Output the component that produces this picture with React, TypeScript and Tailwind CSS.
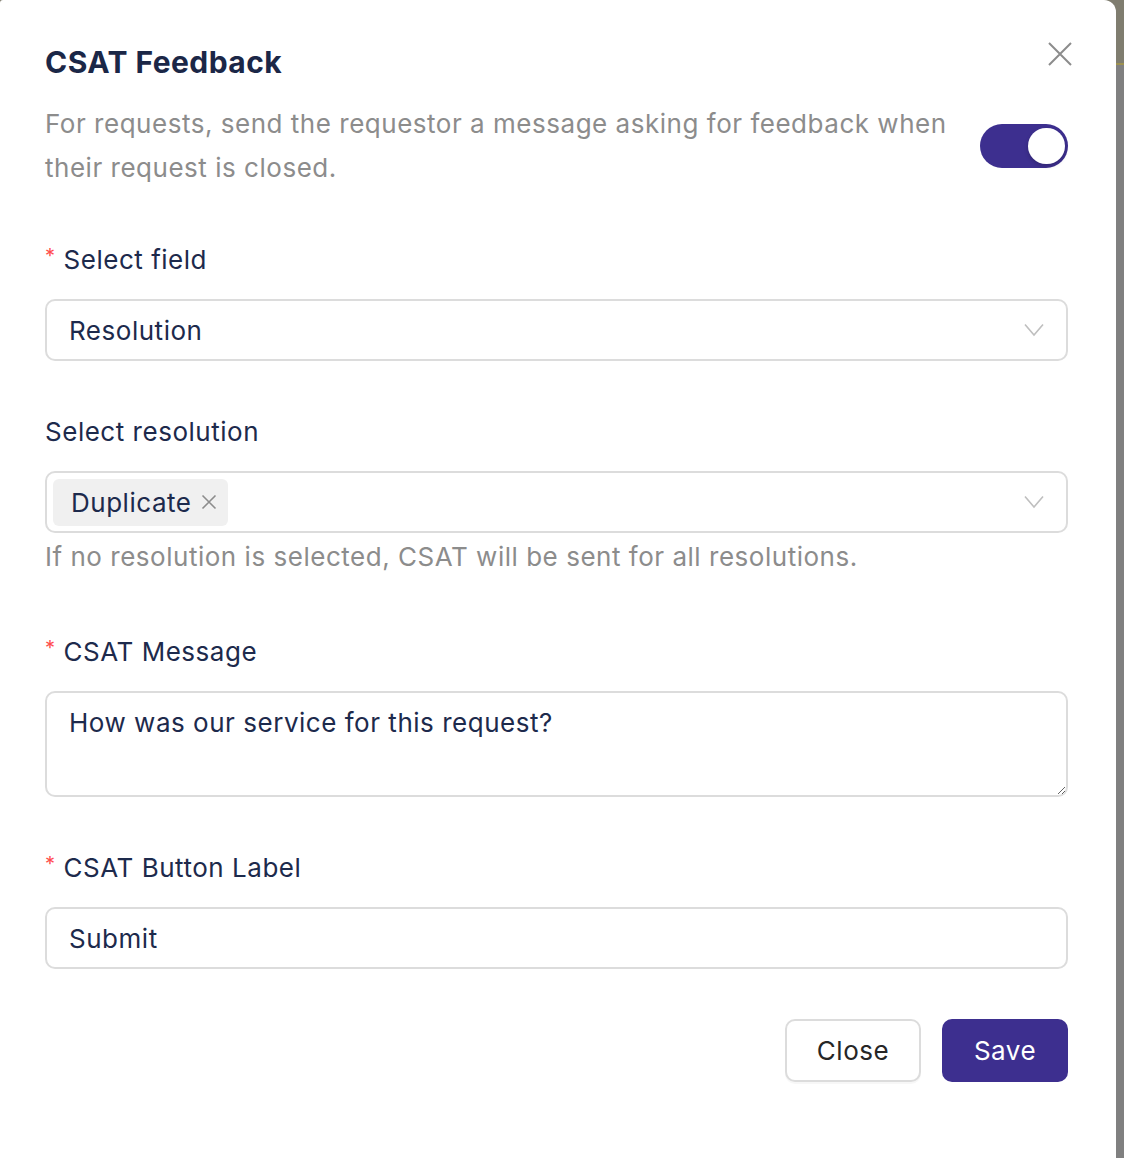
import { useState } from "react";

const Chevron = () => (
  <svg width="20" height="14" viewBox="0 0 20 14" fill="none" className="shrink-0">
    <polyline points="1,1.5 10,12 19,1.5" stroke="#bfbfbf" strokeWidth="1.6" />
  </svg>
);

const Required = () => <span className="mr-[8px] text-[20px] leading-none text-[#ff4d4f] relative -top-[4px]">*</span>;

const Label = ({ children, required }: { children: string; required?: boolean }) => (
  <div className="flex items-center h-[36px] text-[26px] leading-[36px] tracking-[0.02em] text-[#1d2a4c]">
    {required && <Required />}
    {children}
  </div>
);

export default function App() {
  const [enabled, setEnabled] = useState(true);

  return (
    <div className="flex h-[1158px] w-[1124px] bg-[linear-gradient(to_bottom,#7f7d6f_0,#7f7d6f_63px,#9d9150_63px,#9d9150_65px,#808080_65px)] font-['Inter','Noto_Sans',sans-serif] overflow-hidden">
      <div className="relative w-[1116px] bg-white rounded-tr-[12px] rounded-tl-[3px] pl-[45px] pr-[48px] pt-[42px]">
        {/* close icon */}
        <button className="absolute top-[42px] right-[44px] w-[24px] h-[24px]" aria-label="close">
          <svg width="24" height="24" viewBox="0 0 24 24" fill="none">
            <path d="M1 1L23 23M23 1L1 23" stroke="#8c8c8c" strokeWidth="2" />
          </svg>
        </button>

        <h2 className="text-[30px] leading-[40px] font-bold tracking-[0.015em] text-[#1b2747]">CSAT Feedback</h2>

        <div className="mt-[20px] flex items-center justify-between">
          <p className="w-[920px] text-[26px] leading-[44px] tracking-[0.02em] text-[#8c8c8c]">
            For requests, send the requestor a message asking for feedback when their request is closed.
          </p>
          <button
            onClick={() => setEnabled(!enabled)}
            className="relative w-[88px] h-[44px] rounded-full bg-[#3d2f8f] shrink-0"
            aria-label="toggle"
          >
            <span className="absolute top-[4px] right-[3px] w-[37px] h-[36px] rounded-full bg-white shadow-[0_2px_4px_rgba(0,0,0,0.2)]" />
          </button>
        </div>

        <div className="mt-[52px]">
          <Label required>Select field</Label>
          <div className="mt-[21px] h-[62px] flex items-center justify-between border-2 border-[#dcdcdc] rounded-[10px] pl-[22px] pr-[22px] text-[26px] tracking-[0.02em] text-[#1d2a4c]">
            <span>Resolution</span>
            <Chevron />
          </div>
        </div>

        <div className="mt-[53px]">
          <Label>Select resolution</Label>
          <div className="mt-[21px] h-[62px] flex items-center justify-between border-2 border-[#dcdcdc] rounded-[10px] pl-[6px] pr-[22px]">
            <span className="flex items-center h-[47px] rounded-[6px] bg-[#f0f0f0] pl-[18px] pr-[11px] text-[26px] tracking-[0.02em] text-[#1d2a4c]">
              Duplicate
              <svg width="16" height="16" viewBox="0 0 16 16" fill="none" className="ml-[10px]">
                <path d="M1.5 1.5L14.5 14.5M14.5 1.5L1.5 14.5" stroke="#8c8c8c" strokeWidth="1.6" />
              </svg>
            </span>
            <Chevron />
          </div>
          <p className="mt-[6px] text-[26px] leading-[36px] tracking-[0.02em] text-[#8c8c8c]">
            If no resolution is selected, CSAT will be sent for all resolutions.
          </p>
        </div>

        <div className="mt-[59px]">
          <Label required>CSAT Message</Label>
          <textarea
            defaultValue="How was our service for this request?"
            className="mt-[21px] block w-full h-[106px] border-2 border-[#dcdcdc] rounded-[10px] px-[22px] pt-[12px] text-[26px] leading-[36px] tracking-[0.02em] text-[#1d2a4c] resize-y outline-none"
          />
        </div>

        <div className="mt-[53px]">
          <Label required>CSAT Button Label</Label>
          <input
            defaultValue="Submit"
            className="mt-[21px] block w-full h-[62px] border-2 border-[#dcdcdc] rounded-[10px] px-[22px] text-[26px] tracking-[0.02em] text-[#1d2a4c] outline-none"
          />
        </div>

        <div className="mt-[50px] flex justify-end gap-[21px]">
          <button className="w-[136px] h-[63px] rounded-[10px] border-2 border-[#dcdcdc] bg-white text-[26px] tracking-[0.02em] text-[#262626] shadow-[0_2px_0_rgba(0,0,0,0.03)]">
            Close
          </button>
          <button className="w-[126px] h-[63px] rounded-[10px] bg-[#3d2f8f] text-[26px] tracking-[0.02em] text-white">
            Save
          </button>
        </div>
      </div>
    </div>
  );
}
